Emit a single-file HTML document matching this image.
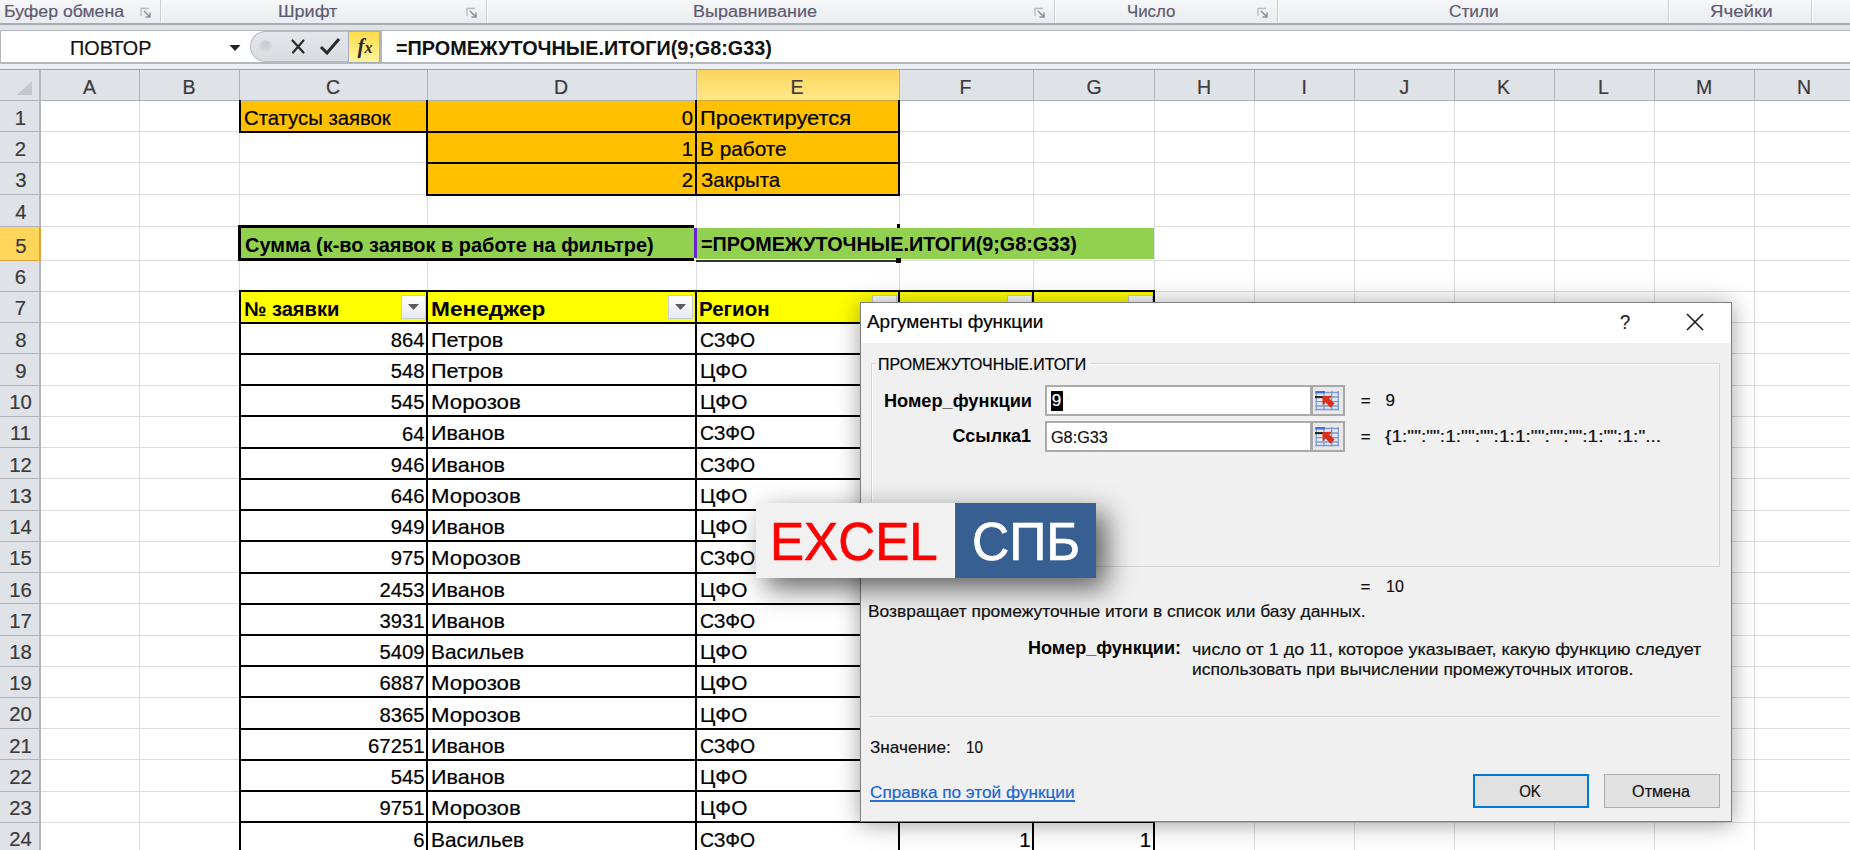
<!DOCTYPE html><html><head><meta charset="utf-8"><style>html,body{margin:0;padding:0;}body{width:1850px;height:850px;overflow:hidden;position:relative;background:#fff;font-family:"Liberation Sans",sans-serif;}</style></head><body>
<div style="position:absolute;left:0px;top:0px;width:1850px;height:23px;background:linear-gradient(#f6f7f9,#e9ecf0);"></div>
<div style="position:absolute;left:0px;top:23px;width:1850px;height:2px;background:#a9adb2;"></div>
<div style="position:absolute;left:0px;top:25px;width:1850px;height:5px;background:#dfe3e8;"></div>
<div style="position:absolute;left:0px;top:30px;width:1850px;height:1px;background:#b4b8bd;"></div>
<div style="position:absolute;left:0px;top:31px;width:1850px;height:32px;background:#ffffff;"></div>
<div style="position:absolute;left:0px;top:62px;width:1850px;height:2px;background:#b4b8bd;"></div>
<div style="position:absolute;left:0px;top:64px;width:1850px;height:5px;background:#eceef6;"></div>
<div style="position:absolute;left:0px;top:69px;width:1850px;height:1px;background:#9fa3a8;"></div>
<div style="position:absolute;left:160px;top:0px;width:1px;height:23px;background:#c9cdd2;"></div>
<div style="position:absolute;left:161px;top:0px;width:1px;height:23px;background:#ffffff;"></div>
<div style="position:absolute;left:486px;top:0px;width:1px;height:23px;background:#c9cdd2;"></div>
<div style="position:absolute;left:487px;top:0px;width:1px;height:23px;background:#ffffff;"></div>
<div style="position:absolute;left:1054px;top:0px;width:1px;height:23px;background:#c9cdd2;"></div>
<div style="position:absolute;left:1055px;top:0px;width:1px;height:23px;background:#ffffff;"></div>
<div style="position:absolute;left:1277px;top:0px;width:1px;height:23px;background:#c9cdd2;"></div>
<div style="position:absolute;left:1278px;top:0px;width:1px;height:23px;background:#ffffff;"></div>
<div style="position:absolute;left:1668px;top:0px;width:1px;height:23px;background:#c9cdd2;"></div>
<div style="position:absolute;left:1669px;top:0px;width:1px;height:23px;background:#ffffff;"></div>
<div style="position:absolute;left:1811px;top:0px;width:1px;height:23px;background:#c9cdd2;"></div>
<div style="position:absolute;left:1812px;top:0px;width:1px;height:23px;background:#ffffff;"></div>
<div style="-webkit-text-stroke:0.2px #5f5a72;position:absolute;top:1.46px;height:21px;line-height:21px;font-family:'Liberation Sans';font-size:16px;font-weight:400;font-style:normal;color:#5f5a72;white-space:pre;;left:3.90px;transform-origin:0 50%;transform:scaleX(1.1037);">Буфер обмена</div>
<div style="-webkit-text-stroke:0.2px #5f5a72;position:absolute;top:1.46px;height:21px;line-height:21px;font-family:'Liberation Sans';font-size:16px;font-weight:400;font-style:normal;color:#5f5a72;white-space:pre;;left:277.87px;transform-origin:0 50%;transform:scaleX(1.1278);">Шрифт</div>
<div style="-webkit-text-stroke:0.2px #5f5a72;position:absolute;top:1.46px;height:21px;line-height:21px;font-family:'Liberation Sans';font-size:16px;font-weight:400;font-style:normal;color:#5f5a72;white-space:pre;;left:693.47px;transform-origin:0 50%;transform:scaleX(1.1260);">Выравнивание</div>
<div style="-webkit-text-stroke:0.2px #5f5a72;position:absolute;top:1.46px;height:21px;line-height:21px;font-family:'Liberation Sans';font-size:16px;font-weight:400;font-style:normal;color:#5f5a72;white-space:pre;;left:1126.55px;transform-origin:0 50%;transform:scaleX(1.0506);">Число</div>
<div style="-webkit-text-stroke:0.2px #5f5a72;position:absolute;top:1.46px;height:21px;line-height:21px;font-family:'Liberation Sans';font-size:16px;font-weight:400;font-style:normal;color:#5f5a72;white-space:pre;;left:1449.00px;transform-origin:0 50%;transform:scaleX(1.0763);">Стили</div>
<div style="-webkit-text-stroke:0.2px #5f5a72;position:absolute;top:1.46px;height:21px;line-height:21px;font-family:'Liberation Sans';font-size:16px;font-weight:400;font-style:normal;color:#5f5a72;white-space:pre;;left:1709.50px;transform-origin:0 50%;transform:scaleX(1.1664);">Ячейки</div>
<svg style="position:absolute;left:140px;top:7px" width="12" height="12" viewBox="0 0 12 12"><path d="M1 9V1.5H9" fill="none" stroke="#b9bdc4" stroke-width="1.3"/><path d="M4 4L10 10M10 5.5V10H5.5" fill="none" stroke="#8c9199" stroke-width="1.5"/></svg>
<svg style="position:absolute;left:466px;top:7px" width="12" height="12" viewBox="0 0 12 12"><path d="M1 9V1.5H9" fill="none" stroke="#b9bdc4" stroke-width="1.3"/><path d="M4 4L10 10M10 5.5V10H5.5" fill="none" stroke="#8c9199" stroke-width="1.5"/></svg>
<svg style="position:absolute;left:1034px;top:7px" width="12" height="12" viewBox="0 0 12 12"><path d="M1 9V1.5H9" fill="none" stroke="#b9bdc4" stroke-width="1.3"/><path d="M4 4L10 10M10 5.5V10H5.5" fill="none" stroke="#8c9199" stroke-width="1.5"/></svg>
<svg style="position:absolute;left:1257px;top:7px" width="12" height="12" viewBox="0 0 12 12"><path d="M1 9V1.5H9" fill="none" stroke="#b9bdc4" stroke-width="1.3"/><path d="M4 4L10 10M10 5.5V10H5.5" fill="none" stroke="#8c9199" stroke-width="1.5"/></svg>
<div style="position:absolute;left:0px;top:31px;width:1px;height:31px;background:#b4b8bd;"></div>
<div style="-webkit-text-stroke:0.2px #111;position:absolute;top:34.84px;height:26px;line-height:26px;font-family:'Liberation Sans';font-size:19.5px;font-weight:400;font-style:normal;color:#111;white-space:pre;;left:70.38px;transform-origin:0 50%;transform:scaleX(1.0168);">ПОВТОР</div>
<svg style="position:absolute;left:229px;top:44px" width="12" height="8" viewBox="0 0 12 8"><path d="M0.5 1H11.5L6 7Z" fill="#222"/></svg>
<div style="position:absolute;left:250px;top:31px;width:110px;height:31px;background:linear-gradient(#e3e6ea,#d9dde2);border:1px solid #b9bdc2;border-right:none;border-radius:16px 0 0 16px;box-sizing:border-box"></div>
<div style="position:absolute;left:259px;top:40px;width:13px;height:13px;border-radius:50%;background:radial-gradient(circle at 50% 35%,#c6c9cd,#d9dcdf 70%)"></div>
<svg style="position:absolute;left:290px;top:38px" width="16" height="17" viewBox="0 0 16 17"><path d="M2.5 2.5L13.5 14.5M13.5 2.5L3 14.5" stroke="#2a2a2a" stroke-width="2.2" fill="none" stroke-linecap="round"/></svg>
<svg style="position:absolute;left:319px;top:37px" width="22" height="18" viewBox="0 0 22 18"><path d="M2 10L8 16L20 2" stroke="#2a2a2a" stroke-width="3" fill="none" stroke-linejoin="miter"/></svg>
<div style="position:absolute;left:348px;top:31px;width:32px;height:32px;background:linear-gradient(#ffdd48,#fff69c);border:1px solid #a6adb9;box-sizing:border-box"></div>
<div style="position:absolute;left:352px;top:33px;width:26px;height:26px;font-family:'Liberation Serif',serif;font-style:italic;font-weight:bold;font-size:21px;color:#2a2a2a;line-height:26px;text-align:center">f<span style="font-size:16px">x</span></div>
<div style="position:absolute;left:380px;top:31px;width:2px;height:31px;background:#b4b8bd;"></div>
<div style="position:absolute;top:34.74px;height:26px;line-height:26px;font-family:'Liberation Sans';font-size:19.8px;font-weight:700;font-style:normal;color:#111;white-space:pre;;left:395.70px;transform-origin:0 50%;transform:scaleX(1.0013);">=ПРОМЕЖУТОЧНЫЕ.ИТОГИ(9;G8:G33)</div>
<div style="position:absolute;left:0px;top:70px;width:1850px;height:30px;background:#dfe2e7;"></div>
<div style="position:absolute;left:0px;top:100px;width:1850px;height:1px;background:#acb0b5;"></div>
<div style="position:absolute;left:0px;top:101px;width:40px;height:750px;background:#dfe2e7;"></div>
<div style="position:absolute;left:39px;top:70px;width:2px;height:780px;background:#b4b8bd;"></div>
<svg style="position:absolute;left:15px;top:80px" width="18" height="16" viewBox="0 0 18 16"><path d="M17 1V15H2Z" fill="#c4c7cb"/></svg>
<div style="-webkit-text-stroke:0.2px #3a3a3a;position:absolute;top:74.04px;height:26px;line-height:26px;font-family:'Liberation Sans';font-size:19.5px;font-weight:400;font-style:normal;color:#3a3a3a;white-space:pre;;left:-410.50px;width:1000px;text-align:center;transform-origin:50% 50%;">A</div>
<div style="position:absolute;left:139px;top:70px;width:1px;height:30px;background:#b0b4b9;"></div>
<div style="-webkit-text-stroke:0.2px #3a3a3a;position:absolute;top:74.04px;height:26px;line-height:26px;font-family:'Liberation Sans';font-size:19.5px;font-weight:400;font-style:normal;color:#3a3a3a;white-space:pre;;left:-311.00px;width:1000px;text-align:center;transform-origin:50% 50%;">B</div>
<div style="position:absolute;left:239px;top:70px;width:1px;height:30px;background:#b0b4b9;"></div>
<div style="-webkit-text-stroke:0.2px #3a3a3a;position:absolute;top:74.04px;height:26px;line-height:26px;font-family:'Liberation Sans';font-size:19.5px;font-weight:400;font-style:normal;color:#3a3a3a;white-space:pre;;left:-166.96px;width:1000px;text-align:center;transform-origin:50% 50%;">C</div>
<div style="position:absolute;left:427px;top:70px;width:1px;height:30px;background:#b0b4b9;"></div>
<div style="-webkit-text-stroke:0.2px #3a3a3a;position:absolute;top:74.04px;height:26px;line-height:26px;font-family:'Liberation Sans';font-size:19.5px;font-weight:400;font-style:normal;color:#3a3a3a;white-space:pre;;left:61.04px;width:1000px;text-align:center;transform-origin:50% 50%;">D</div>
<div style="position:absolute;left:696px;top:70px;width:203px;height:31px;background:linear-gradient(#fbd45f,#ffea8a);"></div>
<div style="position:absolute;left:696px;top:70px;width:1px;height:31px;background:#d8a23c;"></div>
<div style="position:absolute;left:696px;top:100px;width:203px;height:1px;background:#d8a23c;"></div>
<div style="position:absolute;left:696px;top:70px;width:1px;height:30px;background:#b0b4b9;"></div>
<div style="-webkit-text-stroke:0.2px #3a3a3a;position:absolute;top:74.04px;height:26px;line-height:26px;font-family:'Liberation Sans';font-size:19.5px;font-weight:400;font-style:normal;color:#3a3a3a;white-space:pre;;left:297.00px;width:1000px;text-align:center;transform-origin:50% 50%;">E</div>
<div style="position:absolute;left:899px;top:70px;width:1px;height:30px;background:#b0b4b9;"></div>
<div style="-webkit-text-stroke:0.2px #3a3a3a;position:absolute;top:74.04px;height:26px;line-height:26px;font-family:'Liberation Sans';font-size:19.5px;font-weight:400;font-style:normal;color:#3a3a3a;white-space:pre;;left:465.46px;width:1000px;text-align:center;transform-origin:50% 50%;">F</div>
<div style="position:absolute;left:1033px;top:70px;width:1px;height:30px;background:#b0b4b9;"></div>
<div style="-webkit-text-stroke:0.2px #3a3a3a;position:absolute;top:74.04px;height:26px;line-height:26px;font-family:'Liberation Sans';font-size:19.5px;font-weight:400;font-style:normal;color:#3a3a3a;white-space:pre;;left:594.08px;width:1000px;text-align:center;transform-origin:50% 50%;">G</div>
<div style="position:absolute;left:1154px;top:70px;width:1px;height:30px;background:#b0b4b9;"></div>
<div style="-webkit-text-stroke:0.2px #3a3a3a;position:absolute;top:74.04px;height:26px;line-height:26px;font-family:'Liberation Sans';font-size:19.5px;font-weight:400;font-style:normal;color:#3a3a3a;white-space:pre;;left:704.04px;width:1000px;text-align:center;transform-origin:50% 50%;">H</div>
<div style="position:absolute;left:1254px;top:70px;width:1px;height:30px;background:#b0b4b9;"></div>
<div style="-webkit-text-stroke:0.2px #3a3a3a;position:absolute;top:74.04px;height:26px;line-height:26px;font-family:'Liberation Sans';font-size:19.5px;font-weight:400;font-style:normal;color:#3a3a3a;white-space:pre;;left:804.21px;width:1000px;text-align:center;transform-origin:50% 50%;">I</div>
<div style="position:absolute;left:1354px;top:70px;width:1px;height:30px;background:#b0b4b9;"></div>
<div style="-webkit-text-stroke:0.2px #3a3a3a;position:absolute;top:74.04px;height:26px;line-height:26px;font-family:'Liberation Sans';font-size:19.5px;font-weight:400;font-style:normal;color:#3a3a3a;white-space:pre;;left:904.38px;width:1000px;text-align:center;transform-origin:50% 50%;">J</div>
<div style="position:absolute;left:1454px;top:70px;width:1px;height:30px;background:#b0b4b9;"></div>
<div style="-webkit-text-stroke:0.2px #3a3a3a;position:absolute;top:74.04px;height:26px;line-height:26px;font-family:'Liberation Sans';font-size:19.5px;font-weight:400;font-style:normal;color:#3a3a3a;white-space:pre;;left:1003.50px;width:1000px;text-align:center;transform-origin:50% 50%;">K</div>
<div style="position:absolute;left:1554px;top:70px;width:1px;height:30px;background:#b0b4b9;"></div>
<div style="-webkit-text-stroke:0.2px #3a3a3a;position:absolute;top:74.04px;height:26px;line-height:26px;font-family:'Liberation Sans';font-size:19.5px;font-weight:400;font-style:normal;color:#3a3a3a;white-space:pre;;left:1103.42px;width:1000px;text-align:center;transform-origin:50% 50%;">L</div>
<div style="position:absolute;left:1654px;top:70px;width:1px;height:30px;background:#b0b4b9;"></div>
<div style="-webkit-text-stroke:0.2px #3a3a3a;position:absolute;top:74.04px;height:26px;line-height:26px;font-family:'Liberation Sans';font-size:19.5px;font-weight:400;font-style:normal;color:#3a3a3a;white-space:pre;;left:1204.12px;width:1000px;text-align:center;transform-origin:50% 50%;">M</div>
<div style="position:absolute;left:1754px;top:70px;width:1px;height:30px;background:#b0b4b9;"></div>
<div style="-webkit-text-stroke:0.2px #3a3a3a;position:absolute;top:74.04px;height:26px;line-height:26px;font-family:'Liberation Sans';font-size:19.5px;font-weight:400;font-style:normal;color:#3a3a3a;white-space:pre;;left:1304.04px;width:1000px;text-align:center;transform-origin:50% 50%;">N</div>
<div style="position:absolute;left:1754px;top:70px;width:1px;height:30px;background:#b0b4b9;"></div>
<div style="position:absolute;left:0px;top:131px;width:40px;height:1px;background:#b0b4b9;"></div>
<div style="-webkit-text-stroke:0.2px #3a3a3a;position:absolute;top:104.67px;height:27px;line-height:27px;font-family:'Liberation Sans';font-size:20.3px;font-weight:400;font-style:normal;color:#3a3a3a;white-space:pre;;left:-479.56px;width:1000px;text-align:center;transform-origin:50% 50%;">1</div>
<div style="position:absolute;left:0px;top:162px;width:40px;height:1px;background:#b0b4b9;"></div>
<div style="-webkit-text-stroke:0.2px #3a3a3a;position:absolute;top:135.67px;height:27px;line-height:27px;font-family:'Liberation Sans';font-size:20.3px;font-weight:400;font-style:normal;color:#3a3a3a;white-space:pre;;left:-479.56px;width:1000px;text-align:center;transform-origin:50% 50%;">2</div>
<div style="position:absolute;left:0px;top:194px;width:40px;height:1px;background:#b0b4b9;"></div>
<div style="-webkit-text-stroke:0.2px #3a3a3a;position:absolute;top:167.27px;height:27px;line-height:27px;font-family:'Liberation Sans';font-size:20.3px;font-weight:400;font-style:normal;color:#3a3a3a;white-space:pre;;left:-479.06px;width:1000px;text-align:center;transform-origin:50% 50%;">3</div>
<div style="position:absolute;left:0px;top:226px;width:40px;height:1px;background:#b0b4b9;"></div>
<div style="-webkit-text-stroke:0.2px #3a3a3a;position:absolute;top:199.47px;height:27px;line-height:27px;font-family:'Liberation Sans';font-size:20.3px;font-weight:400;font-style:normal;color:#3a3a3a;white-space:pre;;left:-479.06px;width:1000px;text-align:center;transform-origin:50% 50%;">4</div>
<div style="position:absolute;left:0px;top:227px;width:40px;height:34px;background:#ffd55a;"></div>
<div style="position:absolute;left:39px;top:227px;width:2px;height:34px;background:#d8a23c;"></div>
<div style="position:absolute;left:0px;top:260px;width:41px;height:1px;background:#d8a23c;"></div>
<div style="-webkit-text-stroke:0.2px #3a3a3a;position:absolute;top:233.27px;height:27px;line-height:27px;font-family:'Liberation Sans';font-size:20.3px;font-weight:400;font-style:normal;color:#3a3a3a;white-space:pre;;left:-479.06px;width:1000px;text-align:center;transform-origin:50% 50%;">5</div>
<div style="position:absolute;left:0px;top:291px;width:40px;height:1px;background:#b0b4b9;"></div>
<div style="-webkit-text-stroke:0.2px #3a3a3a;position:absolute;top:264.17px;height:27px;line-height:27px;font-family:'Liberation Sans';font-size:20.3px;font-weight:400;font-style:normal;color:#3a3a3a;white-space:pre;;left:-479.56px;width:1000px;text-align:center;transform-origin:50% 50%;">6</div>
<div style="position:absolute;left:0px;top:322px;width:40px;height:1px;background:#b0b4b9;"></div>
<div style="-webkit-text-stroke:0.2px #3a3a3a;position:absolute;top:295.37px;height:27px;line-height:27px;font-family:'Liberation Sans';font-size:20.3px;font-weight:400;font-style:normal;color:#3a3a3a;white-space:pre;;left:-479.56px;width:1000px;text-align:center;transform-origin:50% 50%;">7</div>
<div style="position:absolute;left:0px;top:353px;width:40px;height:1px;background:#b0b4b9;"></div>
<div style="-webkit-text-stroke:0.2px #3a3a3a;position:absolute;top:326.61px;height:27px;line-height:27px;font-family:'Liberation Sans';font-size:20.3px;font-weight:400;font-style:normal;color:#3a3a3a;white-space:pre;;left:-479.06px;width:1000px;text-align:center;transform-origin:50% 50%;">8</div>
<div style="position:absolute;left:0px;top:385px;width:40px;height:1px;background:#b0b4b9;"></div>
<div style="-webkit-text-stroke:0.2px #3a3a3a;position:absolute;top:357.85px;height:27px;line-height:27px;font-family:'Liberation Sans';font-size:20.3px;font-weight:400;font-style:normal;color:#3a3a3a;white-space:pre;;left:-479.06px;width:1000px;text-align:center;transform-origin:50% 50%;">9</div>
<div style="position:absolute;left:0px;top:416px;width:40px;height:1px;background:#b0b4b9;"></div>
<div style="-webkit-text-stroke:0.2px #3a3a3a;position:absolute;top:389.09px;height:27px;line-height:27px;font-family:'Liberation Sans';font-size:20.3px;font-weight:400;font-style:normal;color:#3a3a3a;white-space:pre;;left:-479.56px;width:1000px;text-align:center;transform-origin:50% 50%;">10</div>
<div style="position:absolute;left:0px;top:447px;width:40px;height:1px;background:#b0b4b9;"></div>
<div style="-webkit-text-stroke:0.2px #3a3a3a;position:absolute;top:420.33px;height:27px;line-height:27px;font-family:'Liberation Sans';font-size:20.3px;font-weight:400;font-style:normal;color:#3a3a3a;white-space:pre;;left:-479.56px;width:1000px;text-align:center;transform-origin:50% 50%;">11</div>
<div style="position:absolute;left:0px;top:478px;width:40px;height:1px;background:#b0b4b9;"></div>
<div style="-webkit-text-stroke:0.2px #3a3a3a;position:absolute;top:451.57px;height:27px;line-height:27px;font-family:'Liberation Sans';font-size:20.3px;font-weight:400;font-style:normal;color:#3a3a3a;white-space:pre;;left:-479.56px;width:1000px;text-align:center;transform-origin:50% 50%;">12</div>
<div style="position:absolute;left:0px;top:510px;width:40px;height:1px;background:#b0b4b9;"></div>
<div style="-webkit-text-stroke:0.2px #3a3a3a;position:absolute;top:482.81px;height:27px;line-height:27px;font-family:'Liberation Sans';font-size:20.3px;font-weight:400;font-style:normal;color:#3a3a3a;white-space:pre;;left:-479.56px;width:1000px;text-align:center;transform-origin:50% 50%;">13</div>
<div style="position:absolute;left:0px;top:541px;width:40px;height:1px;background:#b0b4b9;"></div>
<div style="-webkit-text-stroke:0.2px #3a3a3a;position:absolute;top:514.05px;height:27px;line-height:27px;font-family:'Liberation Sans';font-size:20.3px;font-weight:400;font-style:normal;color:#3a3a3a;white-space:pre;;left:-479.56px;width:1000px;text-align:center;transform-origin:50% 50%;">14</div>
<div style="position:absolute;left:0px;top:572px;width:40px;height:1px;background:#b0b4b9;"></div>
<div style="-webkit-text-stroke:0.2px #3a3a3a;position:absolute;top:545.29px;height:27px;line-height:27px;font-family:'Liberation Sans';font-size:20.3px;font-weight:400;font-style:normal;color:#3a3a3a;white-space:pre;;left:-479.56px;width:1000px;text-align:center;transform-origin:50% 50%;">15</div>
<div style="position:absolute;left:0px;top:603px;width:40px;height:1px;background:#b0b4b9;"></div>
<div style="-webkit-text-stroke:0.2px #3a3a3a;position:absolute;top:576.53px;height:27px;line-height:27px;font-family:'Liberation Sans';font-size:20.3px;font-weight:400;font-style:normal;color:#3a3a3a;white-space:pre;;left:-479.56px;width:1000px;text-align:center;transform-origin:50% 50%;">16</div>
<div style="position:absolute;left:0px;top:635px;width:40px;height:1px;background:#b0b4b9;"></div>
<div style="-webkit-text-stroke:0.2px #3a3a3a;position:absolute;top:607.77px;height:27px;line-height:27px;font-family:'Liberation Sans';font-size:20.3px;font-weight:400;font-style:normal;color:#3a3a3a;white-space:pre;;left:-479.56px;width:1000px;text-align:center;transform-origin:50% 50%;">17</div>
<div style="position:absolute;left:0px;top:666px;width:40px;height:1px;background:#b0b4b9;"></div>
<div style="-webkit-text-stroke:0.2px #3a3a3a;position:absolute;top:639.01px;height:27px;line-height:27px;font-family:'Liberation Sans';font-size:20.3px;font-weight:400;font-style:normal;color:#3a3a3a;white-space:pre;;left:-479.56px;width:1000px;text-align:center;transform-origin:50% 50%;">18</div>
<div style="position:absolute;left:0px;top:697px;width:40px;height:1px;background:#b0b4b9;"></div>
<div style="-webkit-text-stroke:0.2px #3a3a3a;position:absolute;top:670.25px;height:27px;line-height:27px;font-family:'Liberation Sans';font-size:20.3px;font-weight:400;font-style:normal;color:#3a3a3a;white-space:pre;;left:-479.56px;width:1000px;text-align:center;transform-origin:50% 50%;">19</div>
<div style="position:absolute;left:0px;top:728px;width:40px;height:1px;background:#b0b4b9;"></div>
<div style="-webkit-text-stroke:0.2px #3a3a3a;position:absolute;top:701.49px;height:27px;line-height:27px;font-family:'Liberation Sans';font-size:20.3px;font-weight:400;font-style:normal;color:#3a3a3a;white-space:pre;;left:-479.56px;width:1000px;text-align:center;transform-origin:50% 50%;">20</div>
<div style="position:absolute;left:0px;top:759px;width:40px;height:1px;background:#b0b4b9;"></div>
<div style="-webkit-text-stroke:0.2px #3a3a3a;position:absolute;top:732.73px;height:27px;line-height:27px;font-family:'Liberation Sans';font-size:20.3px;font-weight:400;font-style:normal;color:#3a3a3a;white-space:pre;;left:-479.56px;width:1000px;text-align:center;transform-origin:50% 50%;">21</div>
<div style="position:absolute;left:0px;top:791px;width:40px;height:1px;background:#b0b4b9;"></div>
<div style="-webkit-text-stroke:0.2px #3a3a3a;position:absolute;top:763.97px;height:27px;line-height:27px;font-family:'Liberation Sans';font-size:20.3px;font-weight:400;font-style:normal;color:#3a3a3a;white-space:pre;;left:-479.56px;width:1000px;text-align:center;transform-origin:50% 50%;">22</div>
<div style="position:absolute;left:0px;top:822px;width:40px;height:1px;background:#b0b4b9;"></div>
<div style="-webkit-text-stroke:0.2px #3a3a3a;position:absolute;top:795.21px;height:27px;line-height:27px;font-family:'Liberation Sans';font-size:20.3px;font-weight:400;font-style:normal;color:#3a3a3a;white-space:pre;;left:-479.56px;width:1000px;text-align:center;transform-origin:50% 50%;">23</div>
<div style="position:absolute;left:0px;top:853px;width:40px;height:1px;background:#b0b4b9;"></div>
<div style="-webkit-text-stroke:0.2px #3a3a3a;position:absolute;top:826.45px;height:27px;line-height:27px;font-family:'Liberation Sans';font-size:20.3px;font-weight:400;font-style:normal;color:#3a3a3a;white-space:pre;;left:-479.56px;width:1000px;text-align:center;transform-origin:50% 50%;">24</div>
<div style="position:absolute;left:139px;top:101px;width:1px;height:750px;background:#dadcdd;"></div>
<div style="position:absolute;left:239px;top:101px;width:1px;height:750px;background:#dadcdd;"></div>
<div style="position:absolute;left:427px;top:101px;width:1px;height:750px;background:#dadcdd;"></div>
<div style="position:absolute;left:696px;top:101px;width:1px;height:750px;background:#dadcdd;"></div>
<div style="position:absolute;left:899px;top:101px;width:1px;height:750px;background:#dadcdd;"></div>
<div style="position:absolute;left:1033px;top:101px;width:1px;height:750px;background:#dadcdd;"></div>
<div style="position:absolute;left:1154px;top:101px;width:1px;height:750px;background:#dadcdd;"></div>
<div style="position:absolute;left:1254px;top:101px;width:1px;height:750px;background:#dadcdd;"></div>
<div style="position:absolute;left:1354px;top:101px;width:1px;height:750px;background:#dadcdd;"></div>
<div style="position:absolute;left:1454px;top:101px;width:1px;height:750px;background:#dadcdd;"></div>
<div style="position:absolute;left:1554px;top:101px;width:1px;height:750px;background:#dadcdd;"></div>
<div style="position:absolute;left:1654px;top:101px;width:1px;height:750px;background:#dadcdd;"></div>
<div style="position:absolute;left:1754px;top:101px;width:1px;height:750px;background:#dadcdd;"></div>
<div style="position:absolute;left:41px;top:131px;width:1810px;height:1px;background:#dadcdd;"></div>
<div style="position:absolute;left:41px;top:162px;width:1810px;height:1px;background:#dadcdd;"></div>
<div style="position:absolute;left:41px;top:194px;width:1810px;height:1px;background:#dadcdd;"></div>
<div style="position:absolute;left:41px;top:226px;width:1810px;height:1px;background:#dadcdd;"></div>
<div style="position:absolute;left:41px;top:260px;width:1810px;height:1px;background:#dadcdd;"></div>
<div style="position:absolute;left:41px;top:291px;width:1810px;height:1px;background:#dadcdd;"></div>
<div style="position:absolute;left:41px;top:322px;width:1810px;height:1px;background:#dadcdd;"></div>
<div style="position:absolute;left:41px;top:353px;width:1810px;height:1px;background:#dadcdd;"></div>
<div style="position:absolute;left:41px;top:385px;width:1810px;height:1px;background:#dadcdd;"></div>
<div style="position:absolute;left:41px;top:416px;width:1810px;height:1px;background:#dadcdd;"></div>
<div style="position:absolute;left:41px;top:447px;width:1810px;height:1px;background:#dadcdd;"></div>
<div style="position:absolute;left:41px;top:478px;width:1810px;height:1px;background:#dadcdd;"></div>
<div style="position:absolute;left:41px;top:510px;width:1810px;height:1px;background:#dadcdd;"></div>
<div style="position:absolute;left:41px;top:541px;width:1810px;height:1px;background:#dadcdd;"></div>
<div style="position:absolute;left:41px;top:572px;width:1810px;height:1px;background:#dadcdd;"></div>
<div style="position:absolute;left:41px;top:603px;width:1810px;height:1px;background:#dadcdd;"></div>
<div style="position:absolute;left:41px;top:635px;width:1810px;height:1px;background:#dadcdd;"></div>
<div style="position:absolute;left:41px;top:666px;width:1810px;height:1px;background:#dadcdd;"></div>
<div style="position:absolute;left:41px;top:697px;width:1810px;height:1px;background:#dadcdd;"></div>
<div style="position:absolute;left:41px;top:728px;width:1810px;height:1px;background:#dadcdd;"></div>
<div style="position:absolute;left:41px;top:759px;width:1810px;height:1px;background:#dadcdd;"></div>
<div style="position:absolute;left:41px;top:791px;width:1810px;height:1px;background:#dadcdd;"></div>
<div style="position:absolute;left:41px;top:822px;width:1810px;height:1px;background:#dadcdd;"></div>
<div style="position:absolute;left:41px;top:853px;width:1810px;height:1px;background:#dadcdd;"></div>
<div style="position:absolute;left:240px;top:101px;width:187px;height:30px;background:#ffc000;"></div>
<div style="position:absolute;left:427px;top:101px;width:472px;height:93px;background:#ffc000;"></div>
<div style="position:absolute;left:239px;top:131px;width:189px;height:2px;background:#000;"></div>
<div style="position:absolute;left:427px;top:131px;width:473px;height:2px;background:#000;"></div>
<div style="position:absolute;left:427px;top:162px;width:473px;height:2px;background:#000;"></div>
<div style="position:absolute;left:427px;top:194px;width:473px;height:2px;background:#000;"></div>
<div style="position:absolute;left:239px;top:100px;width:2px;height:33px;background:#000;"></div>
<div style="position:absolute;left:426px;top:100px;width:2px;height:96px;background:#000;"></div>
<div style="position:absolute;left:695px;top:100px;width:2px;height:96px;background:#000;"></div>
<div style="position:absolute;left:898px;top:100px;width:2px;height:96px;background:#000;"></div>
<div style="-webkit-text-stroke:0.2px #000;position:absolute;top:104.83px;height:27px;line-height:27px;font-family:'Liberation Sans';font-size:20.4px;font-weight:400;font-style:normal;color:#000;white-space:pre;;left:243.80px;transform-origin:0 50%;transform:scaleX(0.9956);">Статусы заявок</div>
<div style="-webkit-text-stroke:0.2px #000;position:absolute;top:104.87px;height:27px;line-height:27px;font-family:'Liberation Sans';font-size:20.3px;font-weight:400;font-style:normal;color:#000;white-space:pre;;left:-307.00px;width:1000px;text-align:right;transform-origin:100% 50%;">0</div>
<div style="-webkit-text-stroke:0.2px #000;position:absolute;top:104.83px;height:27px;line-height:27px;font-family:'Liberation Sans';font-size:20.4px;font-weight:400;font-style:normal;color:#000;white-space:pre;;left:699.92px;transform-origin:0 50%;transform:scaleX(1.0750);">Проектируется</div>
<div style="-webkit-text-stroke:0.2px #000;position:absolute;top:135.87px;height:27px;line-height:27px;font-family:'Liberation Sans';font-size:20.3px;font-weight:400;font-style:normal;color:#000;white-space:pre;;left:-307.00px;width:1000px;text-align:right;transform-origin:100% 50%;">1</div>
<div style="-webkit-text-stroke:0.2px #000;position:absolute;top:135.83px;height:27px;line-height:27px;font-family:'Liberation Sans';font-size:20.4px;font-weight:400;font-style:normal;color:#000;white-space:pre;;left:699.98px;transform-origin:0 50%;transform:scaleX(1.0200);">В работе</div>
<div style="-webkit-text-stroke:0.2px #000;position:absolute;top:167.47px;height:27px;line-height:27px;font-family:'Liberation Sans';font-size:20.3px;font-weight:400;font-style:normal;color:#000;white-space:pre;;left:-307.00px;width:1000px;text-align:right;transform-origin:100% 50%;">2</div>
<div style="-webkit-text-stroke:0.2px #000;position:absolute;top:167.43px;height:27px;line-height:27px;font-family:'Liberation Sans';font-size:20.4px;font-weight:400;font-style:normal;color:#000;white-space:pre;;left:701.00px;transform-origin:0 50%;transform:scaleX(1.0015);">Закрыта</div>
<div style="position:absolute;left:696px;top:228px;width:458px;height:31px;background:#92d050;"></div>
<div style="position:absolute;left:239px;top:226px;width:455px;height:34px;background:#92d050;"></div>
<div style="position:absolute;left:238px;top:225px;width:456px;height:36px;border:3px solid #000;border-right:none;box-sizing:border-box"></div>
<div style="position:absolute;left:697px;top:226px;width:457px;height:2px;background:#ffffff;"></div>
<div style="position:absolute;left:694px;top:228px;width:3px;height:30px;background:#6a22d0;"></div>
<div style="position:absolute;left:696px;top:260px;width:203px;height:2px;background:#333;"></div>
<div style="position:absolute;left:896px;top:258px;width:5px;height:5px;background:#000;"></div>
<div style="position:absolute;left:897px;top:224px;width:3px;height:4px;background:#000;"></div>
<div style="position:absolute;top:232.07px;height:26px;line-height:26px;font-family:'Liberation Sans';font-size:20px;font-weight:700;font-style:normal;color:#000;white-space:pre;;left:244.90px;transform-origin:0 50%;transform:scaleX(0.9966);">Сумма (к-во заявок в работе на фильтре)</div>
<div style="position:absolute;top:231.44px;height:26px;line-height:26px;font-family:'Liberation Sans';font-size:19.8px;font-weight:700;font-style:normal;color:#000;white-space:pre;;left:700.70px;transform-origin:0 50%;transform:scaleX(1.0013);">=ПРОМЕЖУТОЧНЫЕ.ИТОГИ(9;G8:G33)</div>
<div style="position:absolute;left:240px;top:291px;width:914px;height:32px;background:#ffff00;"></div>
<div style="position:absolute;left:239px;top:290px;width:916px;height:2px;background:#000;"></div>
<div style="position:absolute;left:239px;top:322px;width:916px;height:2px;background:#000;"></div>
<div style="position:absolute;left:239px;top:291px;width:2px;height:562px;background:#000;"></div>
<div style="position:absolute;left:426px;top:291px;width:2px;height:562px;background:#000;"></div>
<div style="position:absolute;left:695px;top:291px;width:2px;height:562px;background:#000;"></div>
<div style="position:absolute;left:898px;top:291px;width:2px;height:562px;background:#000;"></div>
<div style="position:absolute;left:1032px;top:291px;width:2px;height:562px;background:#000;"></div>
<div style="position:absolute;left:1153px;top:291px;width:2px;height:562px;background:#000;"></div>
<div style="position:absolute;left:401px;top:295px;width:25px;height:24px;box-sizing:border-box;border:1px solid #c8ccd4;background:linear-gradient(#ffffff,#e6e9ef)"></div>
<svg style="position:absolute;left:407px;top:303px" width="13" height="8" viewBox="0 0 13 8"><path d="M1 1H12L6.5 7Z" fill="#5d5d5d"/></svg>
<div style="position:absolute;left:668px;top:295px;width:25px;height:24px;box-sizing:border-box;border:1px solid #c8ccd4;background:linear-gradient(#ffffff,#e6e9ef)"></div>
<svg style="position:absolute;left:674px;top:303px" width="13" height="8" viewBox="0 0 13 8"><path d="M1 1H12L6.5 7Z" fill="#5d5d5d"/></svg>
<div style="position:absolute;left:872px;top:295px;width:25px;height:24px;box-sizing:border-box;border:1px solid #c8ccd4;background:linear-gradient(#ffffff,#e6e9ef)"></div>
<svg style="position:absolute;left:878px;top:303px" width="13" height="8" viewBox="0 0 13 8"><path d="M1 1H12L6.5 7Z" fill="#5d5d5d"/></svg>
<div style="position:absolute;left:1007px;top:295px;width:25px;height:24px;box-sizing:border-box;border:1px solid #c8ccd4;background:linear-gradient(#ffffff,#e6e9ef)"></div>
<svg style="position:absolute;left:1013px;top:303px" width="13" height="8" viewBox="0 0 13 8"><path d="M1 1H12L6.5 7Z" fill="#5d5d5d"/></svg>
<div style="position:absolute;left:1128px;top:295px;width:25px;height:24px;box-sizing:border-box;border:1px solid #c8ccd4;background:linear-gradient(#ffffff,#e6e9ef)"></div>
<svg style="position:absolute;left:1134px;top:303px" width="13" height="8" viewBox="0 0 13 8"><path d="M1 1H12L6.5 7Z" fill="#5d5d5d"/></svg>
<div style="position:absolute;top:296.17px;height:26px;line-height:26px;font-family:'Liberation Sans';font-size:20px;font-weight:700;font-style:normal;color:#000;white-space:pre;;left:243.90px;transform-origin:0 50%;transform:scaleX(1.0040);">№ заявки</div>
<div style="position:absolute;top:296.17px;height:26px;line-height:26px;font-family:'Liberation Sans';font-size:20px;font-weight:700;font-style:normal;color:#000;white-space:pre;;left:431.17px;transform-origin:0 50%;transform:scaleX(1.1332);">Менеджер</div>
<div style="position:absolute;top:296.17px;height:26px;line-height:26px;font-family:'Liberation Sans';font-size:20px;font-weight:700;font-style:normal;color:#000;white-space:pre;;left:699.48px;transform-origin:0 50%;transform:scaleX(1.0239);">Регион</div>
<div style="position:absolute;left:239px;top:353px;width:916px;height:2px;background:#000;"></div>
<div style="-webkit-text-stroke:0.2px #000;position:absolute;top:326.81px;height:27px;line-height:27px;font-family:'Liberation Sans';font-size:20.3px;font-weight:400;font-style:normal;color:#000;white-space:pre;;left:-575.50px;width:1000px;text-align:right;transform-origin:100% 50%;">864</div>
<div style="-webkit-text-stroke:0.2px #000;position:absolute;top:326.77px;height:27px;line-height:27px;font-family:'Liberation Sans';font-size:20.4px;font-weight:400;font-style:normal;color:#000;white-space:pre;;left:431.04px;transform-origin:0 50%;transform:scaleX(1.0597);">Петров</div>
<div style="-webkit-text-stroke:0.2px #000;position:absolute;top:326.77px;height:27px;line-height:27px;font-family:'Liberation Sans';font-size:20.4px;font-weight:400;font-style:normal;color:#000;white-space:pre;;left:699.65px;transform-origin:0 50%;transform:scaleX(0.9521);">СЗФО</div>
<div style="position:absolute;left:239px;top:384px;width:916px;height:2px;background:#000;"></div>
<div style="-webkit-text-stroke:0.2px #000;position:absolute;top:358.05px;height:27px;line-height:27px;font-family:'Liberation Sans';font-size:20.3px;font-weight:400;font-style:normal;color:#000;white-space:pre;;left:-575.50px;width:1000px;text-align:right;transform-origin:100% 50%;">548</div>
<div style="-webkit-text-stroke:0.2px #000;position:absolute;top:358.01px;height:27px;line-height:27px;font-family:'Liberation Sans';font-size:20.4px;font-weight:400;font-style:normal;color:#000;white-space:pre;;left:431.04px;transform-origin:0 50%;transform:scaleX(1.0597);">Петров</div>
<div style="-webkit-text-stroke:0.2px #000;position:absolute;top:358.01px;height:27px;line-height:27px;font-family:'Liberation Sans';font-size:20.4px;font-weight:400;font-style:normal;color:#000;white-space:pre;;left:699.58px;transform-origin:0 50%;transform:scaleX(1.0183);">ЦФО</div>
<div style="position:absolute;left:239px;top:415px;width:916px;height:2px;background:#000;"></div>
<div style="-webkit-text-stroke:0.2px #000;position:absolute;top:389.29px;height:27px;line-height:27px;font-family:'Liberation Sans';font-size:20.3px;font-weight:400;font-style:normal;color:#000;white-space:pre;;left:-575.50px;width:1000px;text-align:right;transform-origin:100% 50%;">545</div>
<div style="-webkit-text-stroke:0.2px #000;position:absolute;top:389.25px;height:27px;line-height:27px;font-family:'Liberation Sans';font-size:20.4px;font-weight:400;font-style:normal;color:#000;white-space:pre;;left:431.01px;transform-origin:0 50%;transform:scaleX(1.0911);">Морозов</div>
<div style="-webkit-text-stroke:0.2px #000;position:absolute;top:389.25px;height:27px;line-height:27px;font-family:'Liberation Sans';font-size:20.4px;font-weight:400;font-style:normal;color:#000;white-space:pre;;left:699.58px;transform-origin:0 50%;transform:scaleX(1.0183);">ЦФО</div>
<div style="position:absolute;left:239px;top:447px;width:916px;height:2px;background:#000;"></div>
<div style="-webkit-text-stroke:0.2px #000;position:absolute;top:420.53px;height:27px;line-height:27px;font-family:'Liberation Sans';font-size:20.3px;font-weight:400;font-style:normal;color:#000;white-space:pre;;left:-575.50px;width:1000px;text-align:right;transform-origin:100% 50%;">64</div>
<div style="-webkit-text-stroke:0.2px #000;position:absolute;top:420.49px;height:27px;line-height:27px;font-family:'Liberation Sans';font-size:20.4px;font-weight:400;font-style:normal;color:#000;white-space:pre;;left:431.04px;transform-origin:0 50%;transform:scaleX(1.0557);">Иванов</div>
<div style="-webkit-text-stroke:0.2px #000;position:absolute;top:420.49px;height:27px;line-height:27px;font-family:'Liberation Sans';font-size:20.4px;font-weight:400;font-style:normal;color:#000;white-space:pre;;left:699.65px;transform-origin:0 50%;transform:scaleX(0.9521);">СЗФО</div>
<div style="position:absolute;left:239px;top:478px;width:916px;height:2px;background:#000;"></div>
<div style="-webkit-text-stroke:0.2px #000;position:absolute;top:451.77px;height:27px;line-height:27px;font-family:'Liberation Sans';font-size:20.3px;font-weight:400;font-style:normal;color:#000;white-space:pre;;left:-575.50px;width:1000px;text-align:right;transform-origin:100% 50%;">946</div>
<div style="-webkit-text-stroke:0.2px #000;position:absolute;top:451.73px;height:27px;line-height:27px;font-family:'Liberation Sans';font-size:20.4px;font-weight:400;font-style:normal;color:#000;white-space:pre;;left:431.04px;transform-origin:0 50%;transform:scaleX(1.0557);">Иванов</div>
<div style="-webkit-text-stroke:0.2px #000;position:absolute;top:451.73px;height:27px;line-height:27px;font-family:'Liberation Sans';font-size:20.4px;font-weight:400;font-style:normal;color:#000;white-space:pre;;left:699.65px;transform-origin:0 50%;transform:scaleX(0.9521);">СЗФО</div>
<div style="position:absolute;left:239px;top:509px;width:916px;height:2px;background:#000;"></div>
<div style="-webkit-text-stroke:0.2px #000;position:absolute;top:483.01px;height:27px;line-height:27px;font-family:'Liberation Sans';font-size:20.3px;font-weight:400;font-style:normal;color:#000;white-space:pre;;left:-575.50px;width:1000px;text-align:right;transform-origin:100% 50%;">646</div>
<div style="-webkit-text-stroke:0.2px #000;position:absolute;top:482.97px;height:27px;line-height:27px;font-family:'Liberation Sans';font-size:20.4px;font-weight:400;font-style:normal;color:#000;white-space:pre;;left:431.01px;transform-origin:0 50%;transform:scaleX(1.0911);">Морозов</div>
<div style="-webkit-text-stroke:0.2px #000;position:absolute;top:482.97px;height:27px;line-height:27px;font-family:'Liberation Sans';font-size:20.4px;font-weight:400;font-style:normal;color:#000;white-space:pre;;left:699.58px;transform-origin:0 50%;transform:scaleX(1.0183);">ЦФО</div>
<div style="position:absolute;left:239px;top:540px;width:916px;height:2px;background:#000;"></div>
<div style="-webkit-text-stroke:0.2px #000;position:absolute;top:514.25px;height:27px;line-height:27px;font-family:'Liberation Sans';font-size:20.3px;font-weight:400;font-style:normal;color:#000;white-space:pre;;left:-575.50px;width:1000px;text-align:right;transform-origin:100% 50%;">949</div>
<div style="-webkit-text-stroke:0.2px #000;position:absolute;top:514.21px;height:27px;line-height:27px;font-family:'Liberation Sans';font-size:20.4px;font-weight:400;font-style:normal;color:#000;white-space:pre;;left:431.04px;transform-origin:0 50%;transform:scaleX(1.0557);">Иванов</div>
<div style="-webkit-text-stroke:0.2px #000;position:absolute;top:514.21px;height:27px;line-height:27px;font-family:'Liberation Sans';font-size:20.4px;font-weight:400;font-style:normal;color:#000;white-space:pre;;left:699.58px;transform-origin:0 50%;transform:scaleX(1.0183);">ЦФО</div>
<div style="position:absolute;left:239px;top:572px;width:916px;height:2px;background:#000;"></div>
<div style="-webkit-text-stroke:0.2px #000;position:absolute;top:545.49px;height:27px;line-height:27px;font-family:'Liberation Sans';font-size:20.3px;font-weight:400;font-style:normal;color:#000;white-space:pre;;left:-575.50px;width:1000px;text-align:right;transform-origin:100% 50%;">975</div>
<div style="-webkit-text-stroke:0.2px #000;position:absolute;top:545.45px;height:27px;line-height:27px;font-family:'Liberation Sans';font-size:20.4px;font-weight:400;font-style:normal;color:#000;white-space:pre;;left:431.01px;transform-origin:0 50%;transform:scaleX(1.0911);">Морозов</div>
<div style="-webkit-text-stroke:0.2px #000;position:absolute;top:545.45px;height:27px;line-height:27px;font-family:'Liberation Sans';font-size:20.4px;font-weight:400;font-style:normal;color:#000;white-space:pre;;left:699.65px;transform-origin:0 50%;transform:scaleX(0.9521);">СЗФО</div>
<div style="position:absolute;left:239px;top:603px;width:916px;height:2px;background:#000;"></div>
<div style="-webkit-text-stroke:0.2px #000;position:absolute;top:576.73px;height:27px;line-height:27px;font-family:'Liberation Sans';font-size:20.3px;font-weight:400;font-style:normal;color:#000;white-space:pre;;left:-575.50px;width:1000px;text-align:right;transform-origin:100% 50%;">2453</div>
<div style="-webkit-text-stroke:0.2px #000;position:absolute;top:576.69px;height:27px;line-height:27px;font-family:'Liberation Sans';font-size:20.4px;font-weight:400;font-style:normal;color:#000;white-space:pre;;left:431.04px;transform-origin:0 50%;transform:scaleX(1.0557);">Иванов</div>
<div style="-webkit-text-stroke:0.2px #000;position:absolute;top:576.69px;height:27px;line-height:27px;font-family:'Liberation Sans';font-size:20.4px;font-weight:400;font-style:normal;color:#000;white-space:pre;;left:699.58px;transform-origin:0 50%;transform:scaleX(1.0183);">ЦФО</div>
<div style="position:absolute;left:239px;top:634px;width:916px;height:2px;background:#000;"></div>
<div style="-webkit-text-stroke:0.2px #000;position:absolute;top:607.97px;height:27px;line-height:27px;font-family:'Liberation Sans';font-size:20.3px;font-weight:400;font-style:normal;color:#000;white-space:pre;;left:-575.50px;width:1000px;text-align:right;transform-origin:100% 50%;">3931</div>
<div style="-webkit-text-stroke:0.2px #000;position:absolute;top:607.93px;height:27px;line-height:27px;font-family:'Liberation Sans';font-size:20.4px;font-weight:400;font-style:normal;color:#000;white-space:pre;;left:431.04px;transform-origin:0 50%;transform:scaleX(1.0557);">Иванов</div>
<div style="-webkit-text-stroke:0.2px #000;position:absolute;top:607.93px;height:27px;line-height:27px;font-family:'Liberation Sans';font-size:20.4px;font-weight:400;font-style:normal;color:#000;white-space:pre;;left:699.65px;transform-origin:0 50%;transform:scaleX(0.9521);">СЗФО</div>
<div style="position:absolute;left:239px;top:665px;width:916px;height:2px;background:#000;"></div>
<div style="-webkit-text-stroke:0.2px #000;position:absolute;top:639.21px;height:27px;line-height:27px;font-family:'Liberation Sans';font-size:20.3px;font-weight:400;font-style:normal;color:#000;white-space:pre;;left:-575.50px;width:1000px;text-align:right;transform-origin:100% 50%;">5409</div>
<div style="-webkit-text-stroke:0.2px #000;position:absolute;top:639.17px;height:27px;line-height:27px;font-family:'Liberation Sans';font-size:20.4px;font-weight:400;font-style:normal;color:#000;white-space:pre;;left:431.08px;transform-origin:0 50%;transform:scaleX(1.0214);">Васильев</div>
<div style="-webkit-text-stroke:0.2px #000;position:absolute;top:639.17px;height:27px;line-height:27px;font-family:'Liberation Sans';font-size:20.4px;font-weight:400;font-style:normal;color:#000;white-space:pre;;left:699.58px;transform-origin:0 50%;transform:scaleX(1.0183);">ЦФО</div>
<div style="position:absolute;left:239px;top:696px;width:916px;height:2px;background:#000;"></div>
<div style="-webkit-text-stroke:0.2px #000;position:absolute;top:670.45px;height:27px;line-height:27px;font-family:'Liberation Sans';font-size:20.3px;font-weight:400;font-style:normal;color:#000;white-space:pre;;left:-575.50px;width:1000px;text-align:right;transform-origin:100% 50%;">6887</div>
<div style="-webkit-text-stroke:0.2px #000;position:absolute;top:670.41px;height:27px;line-height:27px;font-family:'Liberation Sans';font-size:20.4px;font-weight:400;font-style:normal;color:#000;white-space:pre;;left:431.01px;transform-origin:0 50%;transform:scaleX(1.0911);">Морозов</div>
<div style="-webkit-text-stroke:0.2px #000;position:absolute;top:670.41px;height:27px;line-height:27px;font-family:'Liberation Sans';font-size:20.4px;font-weight:400;font-style:normal;color:#000;white-space:pre;;left:699.58px;transform-origin:0 50%;transform:scaleX(1.0183);">ЦФО</div>
<div style="position:absolute;left:239px;top:728px;width:916px;height:2px;background:#000;"></div>
<div style="-webkit-text-stroke:0.2px #000;position:absolute;top:701.69px;height:27px;line-height:27px;font-family:'Liberation Sans';font-size:20.3px;font-weight:400;font-style:normal;color:#000;white-space:pre;;left:-575.50px;width:1000px;text-align:right;transform-origin:100% 50%;">8365</div>
<div style="-webkit-text-stroke:0.2px #000;position:absolute;top:701.65px;height:27px;line-height:27px;font-family:'Liberation Sans';font-size:20.4px;font-weight:400;font-style:normal;color:#000;white-space:pre;;left:431.01px;transform-origin:0 50%;transform:scaleX(1.0911);">Морозов</div>
<div style="-webkit-text-stroke:0.2px #000;position:absolute;top:701.65px;height:27px;line-height:27px;font-family:'Liberation Sans';font-size:20.4px;font-weight:400;font-style:normal;color:#000;white-space:pre;;left:699.58px;transform-origin:0 50%;transform:scaleX(1.0183);">ЦФО</div>
<div style="position:absolute;left:239px;top:759px;width:916px;height:2px;background:#000;"></div>
<div style="-webkit-text-stroke:0.2px #000;position:absolute;top:732.93px;height:27px;line-height:27px;font-family:'Liberation Sans';font-size:20.3px;font-weight:400;font-style:normal;color:#000;white-space:pre;;left:-575.50px;width:1000px;text-align:right;transform-origin:100% 50%;">67251</div>
<div style="-webkit-text-stroke:0.2px #000;position:absolute;top:732.89px;height:27px;line-height:27px;font-family:'Liberation Sans';font-size:20.4px;font-weight:400;font-style:normal;color:#000;white-space:pre;;left:431.04px;transform-origin:0 50%;transform:scaleX(1.0557);">Иванов</div>
<div style="-webkit-text-stroke:0.2px #000;position:absolute;top:732.89px;height:27px;line-height:27px;font-family:'Liberation Sans';font-size:20.4px;font-weight:400;font-style:normal;color:#000;white-space:pre;;left:699.65px;transform-origin:0 50%;transform:scaleX(0.9521);">СЗФО</div>
<div style="position:absolute;left:239px;top:790px;width:916px;height:2px;background:#000;"></div>
<div style="-webkit-text-stroke:0.2px #000;position:absolute;top:764.17px;height:27px;line-height:27px;font-family:'Liberation Sans';font-size:20.3px;font-weight:400;font-style:normal;color:#000;white-space:pre;;left:-575.50px;width:1000px;text-align:right;transform-origin:100% 50%;">545</div>
<div style="-webkit-text-stroke:0.2px #000;position:absolute;top:764.13px;height:27px;line-height:27px;font-family:'Liberation Sans';font-size:20.4px;font-weight:400;font-style:normal;color:#000;white-space:pre;;left:431.04px;transform-origin:0 50%;transform:scaleX(1.0557);">Иванов</div>
<div style="-webkit-text-stroke:0.2px #000;position:absolute;top:764.13px;height:27px;line-height:27px;font-family:'Liberation Sans';font-size:20.4px;font-weight:400;font-style:normal;color:#000;white-space:pre;;left:699.58px;transform-origin:0 50%;transform:scaleX(1.0183);">ЦФО</div>
<div style="position:absolute;left:239px;top:821px;width:916px;height:2px;background:#000;"></div>
<div style="-webkit-text-stroke:0.2px #000;position:absolute;top:795.41px;height:27px;line-height:27px;font-family:'Liberation Sans';font-size:20.3px;font-weight:400;font-style:normal;color:#000;white-space:pre;;left:-575.50px;width:1000px;text-align:right;transform-origin:100% 50%;">9751</div>
<div style="-webkit-text-stroke:0.2px #000;position:absolute;top:795.37px;height:27px;line-height:27px;font-family:'Liberation Sans';font-size:20.4px;font-weight:400;font-style:normal;color:#000;white-space:pre;;left:431.01px;transform-origin:0 50%;transform:scaleX(1.0911);">Морозов</div>
<div style="-webkit-text-stroke:0.2px #000;position:absolute;top:795.37px;height:27px;line-height:27px;font-family:'Liberation Sans';font-size:20.4px;font-weight:400;font-style:normal;color:#000;white-space:pre;;left:699.58px;transform-origin:0 50%;transform:scaleX(1.0183);">ЦФО</div>
<div style="-webkit-text-stroke:0.2px #000;position:absolute;top:826.65px;height:27px;line-height:27px;font-family:'Liberation Sans';font-size:20.3px;font-weight:400;font-style:normal;color:#000;white-space:pre;;left:-575.50px;width:1000px;text-align:right;transform-origin:100% 50%;">6</div>
<div style="-webkit-text-stroke:0.2px #000;position:absolute;top:826.61px;height:27px;line-height:27px;font-family:'Liberation Sans';font-size:20.4px;font-weight:400;font-style:normal;color:#000;white-space:pre;;left:431.08px;transform-origin:0 50%;transform:scaleX(1.0214);">Васильев</div>
<div style="-webkit-text-stroke:0.2px #000;position:absolute;top:826.61px;height:27px;line-height:27px;font-family:'Liberation Sans';font-size:20.4px;font-weight:400;font-style:normal;color:#000;white-space:pre;;left:699.65px;transform-origin:0 50%;transform:scaleX(0.9521);">СЗФО</div>
<div style="-webkit-text-stroke:0.2px #000;position:absolute;top:826.65px;height:27px;line-height:27px;font-family:'Liberation Sans';font-size:20.3px;font-weight:400;font-style:normal;color:#000;white-space:pre;;left:30.50px;width:1000px;text-align:right;transform-origin:100% 50%;">1</div>
<div style="-webkit-text-stroke:0.2px #000;position:absolute;top:826.65px;height:27px;line-height:27px;font-family:'Liberation Sans';font-size:20.3px;font-weight:400;font-style:normal;color:#000;white-space:pre;;left:151.00px;width:1000px;text-align:right;transform-origin:100% 50%;">1</div>
<div style="position:absolute;left:860px;top:302px;width:872px;height:520px;box-sizing:border-box;border:1px solid #7f7f7f;background:#f0f0f0;box-shadow:0 2px 22px rgba(0,0,0,0.38)"></div>
<div style="position:absolute;left:861px;top:303px;width:870px;height:40px;background:#ffffff;"></div>
<div style="-webkit-text-stroke:0.2px #000;position:absolute;top:309.42px;height:25px;line-height:25px;font-family:'Liberation Sans';font-size:19px;font-weight:400;font-style:normal;color:#000;white-space:pre;;left:866.50px;transform-origin:0 50%;transform:scaleX(0.9958);">Аргументы функции</div>
<div style="-webkit-text-stroke:0.2px #222;position:absolute;top:308.12px;height:28px;line-height:28px;font-family:'Liberation Sans';font-size:21px;font-weight:400;font-style:normal;color:#222;white-space:pre;;left:1620.40px;transform-origin:0 50%;transform:scaleX(0.8727);">?</div>
<svg style="position:absolute;left:1686px;top:313px" width="18" height="18" viewBox="0 0 18 18"><path d="M1 1L17 17M17 1L1 17" stroke="#1a1a1a" stroke-width="1.6"/></svg>
<div style="position:absolute;left:871px;top:363px;width:849px;height:204px;box-sizing:border-box;border:1px solid #d5d5d5;box-shadow:inset 1px 1px 0 #fff"></div>
<div style="position:absolute;left:876px;top:355px;width:214px;height:14px;background:#f0f0f0;"></div>
<div style="-webkit-text-stroke:0.2px #000;position:absolute;top:352.91px;height:23px;line-height:23px;font-family:'Liberation Sans';font-size:17px;font-weight:400;font-style:normal;color:#000;white-space:pre;;left:877.86px;transform-origin:0 50%;transform:scaleX(0.9354);">ПРОМЕЖУТОЧНЫЕ.ИТОГИ</div>
<div style="position:absolute;top:388.56px;height:24px;line-height:24px;font-family:'Liberation Sans';font-size:18px;font-weight:700;font-style:normal;color:#000;white-space:pre;;left:32.38px;width:1000px;text-align:right;transform-origin:100% 50%;transform:scaleX(1.0095);">Номер_функции</div>
<div style="position:absolute;top:424.16px;height:24px;line-height:24px;font-family:'Liberation Sans';font-size:18px;font-weight:700;font-style:normal;color:#000;white-space:pre;;left:30.61px;width:1000px;text-align:right;transform-origin:100% 50%;transform:scaleX(0.9975);">Ссылка1</div>
<div style="position:absolute;left:1045px;top:385px;width:267px;height:31px;box-sizing:border-box;border:2px solid #ababab;background:#fff"></div>
<div style="position:absolute;left:1311px;top:385px;width:34px;height:31px;box-sizing:border-box;border:2px solid #a8a8a8;background:#e8e8e8"></div>
<svg style="position:absolute;left:1315px;top:390.5px" width="24" height="20" viewBox="0 0 24 20">
<path d="M0.5 1.5H24M0.5 6H24M0.5 10.6H24M0.5 15H24M0.5 18.5H24" stroke="#7c9bd6" stroke-width="1.3"/>
<path d="M1.3 0V19.5M8.9 0V19.5M16.7 0V19.5M23.3 0V19.5" stroke="#7c9bd6" stroke-width="1.3"/>
<rect x="0.4" y="0" width="9.6" height="2.4" fill="#3f6fe0"/>
<rect x="0" y="5" width="8" height="2.2" fill="#2a2a2a"/>
<path d="M7.5 5L17 4.8L14.3 7.8L19.6 12.6L15.6 16.8L10.6 11.6L7.6 14.6Z" fill="#d8301c"/>
</svg>
<div style="position:absolute;left:1045px;top:421px;width:267px;height:31px;box-sizing:border-box;border:2px solid #ababab;background:#fff"></div>
<div style="position:absolute;left:1311px;top:421px;width:34px;height:31px;box-sizing:border-box;border:2px solid #a8a8a8;background:#e8e8e8"></div>
<svg style="position:absolute;left:1315px;top:426.5px" width="24" height="20" viewBox="0 0 24 20">
<path d="M0.5 1.5H24M0.5 6H24M0.5 10.6H24M0.5 15H24M0.5 18.5H24" stroke="#7c9bd6" stroke-width="1.3"/>
<path d="M1.3 0V19.5M8.9 0V19.5M16.7 0V19.5M23.3 0V19.5" stroke="#7c9bd6" stroke-width="1.3"/>
<rect x="0.4" y="0" width="9.6" height="2.4" fill="#3f6fe0"/>
<rect x="0" y="5" width="8" height="2.2" fill="#2a2a2a"/>
<path d="M7.5 5L17 4.8L14.3 7.8L19.6 12.6L15.6 16.8L10.6 11.6L7.6 14.6Z" fill="#d8301c"/>
</svg>
<div style="position:absolute;left:1051px;top:391px;width:11.5px;height:20px;background:#000;"></div>
<div style="-webkit-text-stroke:0.2px #fff;position:absolute;top:389.11px;height:23px;line-height:23px;font-family:'Liberation Sans';font-size:17px;font-weight:400;font-style:normal;color:#fff;white-space:pre;;left:1051.80px;transform-origin:0 50%;">9</div>
<div style="-webkit-text-stroke:0.2px #111;position:absolute;top:426.21px;height:23px;line-height:23px;font-family:'Liberation Sans';font-size:17px;font-weight:400;font-style:normal;color:#111;white-space:pre;;left:1051.00px;transform-origin:0 50%;transform:scaleX(0.9547);">G8:G33</div>
<div style="-webkit-text-stroke:0.2px #111;position:absolute;top:388.61px;height:23px;line-height:23px;font-family:'Liberation Sans';font-size:17px;font-weight:400;font-style:normal;color:#111;white-space:pre;;left:1360.80px;transform-origin:0 50%;">=</div>
<div style="-webkit-text-stroke:0.2px #111;position:absolute;top:388.61px;height:23px;line-height:23px;font-family:'Liberation Sans';font-size:17px;font-weight:400;font-style:normal;color:#111;white-space:pre;;left:1385.40px;transform-origin:0 50%;">9</div>
<div style="-webkit-text-stroke:0.2px #111;position:absolute;top:425.01px;height:23px;line-height:23px;font-family:'Liberation Sans';font-size:17px;font-weight:400;font-style:normal;color:#111;white-space:pre;;left:1360.80px;transform-origin:0 50%;">=</div>
<div style="-webkit-text-stroke:0.2px #111;position:absolute;top:425.01px;height:23px;line-height:23px;font-family:'Liberation Sans';font-size:17px;font-weight:400;font-style:normal;color:#111;white-space:pre;;left:1385.00px;transform-origin:0 50%;transform:scaleX(1.1257);">{1:"":"":1:"":"":1:1:"":"":"":1:"":1:"...</div>
<div style="-webkit-text-stroke:0.2px #111;position:absolute;top:575.01px;height:23px;line-height:23px;font-family:'Liberation Sans';font-size:17px;font-weight:400;font-style:normal;color:#111;white-space:pre;;left:1360.60px;transform-origin:0 50%;">=</div>
<div style="-webkit-text-stroke:0.2px #111;position:absolute;top:575.01px;height:23px;line-height:23px;font-family:'Liberation Sans';font-size:17px;font-weight:400;font-style:normal;color:#111;white-space:pre;;left:1386.26px;transform-origin:0 50%;transform:scaleX(0.9396);">10</div>
<div style="-webkit-text-stroke:0.2px #111;position:absolute;top:600.11px;height:23px;line-height:23px;font-family:'Liberation Sans';font-size:17px;font-weight:400;font-style:normal;color:#111;white-space:pre;;left:868.18px;transform-origin:0 50%;transform:scaleX(1.0227);">Возвращает промежуточные итоги в список или базу данных.</div>
<div style="position:absolute;top:637.14px;height:23px;line-height:23px;font-family:'Liberation Sans';font-size:17.5px;font-weight:700;font-style:normal;color:#000;white-space:pre;;left:180.75px;width:1000px;text-align:right;transform-origin:100% 50%;transform:scaleX(1.0306);">Номер_функции:</div>
<div style="-webkit-text-stroke:0.2px #111;position:absolute;top:637.51px;height:23px;line-height:23px;font-family:'Liberation Sans';font-size:17px;font-weight:400;font-style:normal;color:#111;white-space:pre;;left:1191.64px;transform-origin:0 50%;transform:scaleX(1.0563);">число от 1 до 11, которое указывает, какую функцию следует</div>
<div style="-webkit-text-stroke:0.2px #111;position:absolute;top:657.61px;height:23px;line-height:23px;font-family:'Liberation Sans';font-size:17px;font-weight:400;font-style:normal;color:#111;white-space:pre;;left:1191.67px;transform-origin:0 50%;transform:scaleX(1.0266);">использовать при вычислении промежуточных итогов.</div>
<div style="position:absolute;left:870px;top:716px;width:850px;height:1px;background:#d9d9d9;"></div>
<div style="-webkit-text-stroke:0.2px #111;position:absolute;top:735.81px;height:23px;line-height:23px;font-family:'Liberation Sans';font-size:17px;font-weight:400;font-style:normal;color:#111;white-space:pre;;left:869.50px;transform-origin:0 50%;transform:scaleX(1.0077);">Значение:</div>
<div style="-webkit-text-stroke:0.2px #111;position:absolute;top:735.81px;height:23px;line-height:23px;font-family:'Liberation Sans';font-size:17px;font-weight:400;font-style:normal;color:#111;white-space:pre;;left:966.11px;transform-origin:0 50%;transform:scaleX(0.8937);">10</div>
<div style="-webkit-text-stroke:0.2px #1a66d0;position:absolute;top:780.91px;height:23px;line-height:23px;font-family:'Liberation Sans';font-size:17px;font-weight:400;font-style:normal;color:#1a66d0;white-space:pre;;left:870.00px;transform-origin:0 50%;transform:scaleX(1.0113);">Справка по этой функции</div>
<div style="position:absolute;left:870px;top:800px;width:205px;height:1.6px;background:#2a70d6;"></div>
<div style="position:absolute;left:1473px;top:774px;width:116px;height:34px;box-sizing:border-box;border:2px solid #0078d7;background:#e1e1e1"></div>
<div style="position:absolute;left:1604px;top:774px;width:116px;height:34px;box-sizing:border-box;border:1px solid #adadad;background:#e1e1e1"></div>
<div style="-webkit-text-stroke:0.2px #111;position:absolute;top:779.91px;height:23px;line-height:23px;font-family:'Liberation Sans';font-size:17px;font-weight:400;font-style:normal;color:#111;white-space:pre;;left:1030.41px;width:1000px;text-align:center;transform-origin:50% 50%;transform:scaleX(0.8841);">OK</div>
<div style="-webkit-text-stroke:0.2px #111;position:absolute;top:779.91px;height:23px;line-height:23px;font-family:'Liberation Sans';font-size:17px;font-weight:400;font-style:normal;color:#111;white-space:pre;;left:1161.04px;width:1000px;text-align:center;transform-origin:50% 50%;transform:scaleX(0.9474);">Отмена</div>
<div style="position:absolute;left:756px;top:503px;width:340px;height:75px;box-shadow:10px 10px 28px rgba(0,0,0,0.62)"></div>
<div style="position:absolute;left:756px;top:503px;width:199px;height:75px;background:#f1f1f1;"></div>
<div style="position:absolute;left:954px;top:503px;width:1px;height:75px;background:#ffffff;"></div>
<div style="position:absolute;left:955px;top:503px;width:141px;height:75px;background:#375f91;"></div>
<div style="position:absolute;top:507.04px;height:69px;line-height:69px;font-family:'Liberation Sans';font-size:53px;font-weight:400;font-style:normal;color:#ff0000;white-space:pre;-webkit-text-stroke:0.7px #ff0000;left:769.64px;transform-origin:0 50%;transform:scaleX(0.9648);">EXCEL</div>
<div style="position:absolute;top:506.84px;height:69px;line-height:69px;font-family:'Liberation Sans';font-size:53px;font-weight:400;font-style:normal;color:#ffffff;white-space:pre;-webkit-text-stroke:0.7px #ffffff;left:972.05px;transform-origin:0 50%;transform:scaleX(0.9733);">СПБ</div>
</body></html>
